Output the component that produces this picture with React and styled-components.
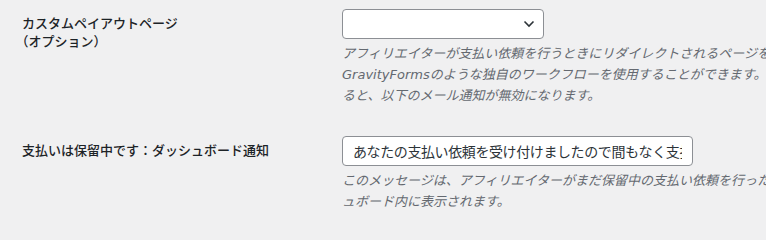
import React from 'react';
import styled, { createGlobalStyle } from 'styled-components';

const GlobalStyle = createGlobalStyle`
  html, body { margin: 0; padding: 0; background: #f0f0f1; overflow: hidden; }
  body {
    font-family: "DejaVu Sans", "Noto Sans CJK JP", sans-serif;
    color: #1d2327;
  }
`;

const Page = styled.div`
  width: 1100px;
  padding: 9px 0 0 22px;
  display: flex;
  flex-direction: column;
  gap: 30px;
`;

const Row = styled.div`
  display: grid;
  grid-template-columns: 320px 1fr;
  align-items: start;
`;

const Label = styled.div`
  padding-top: 5px;
  font-size: 13px;
  font-weight: 500;
  line-height: 18px;
  font-family: "Noto Sans CJK JP", sans-serif;
`;

const Tight = styled.span`
  font-feature-settings: "halt";
`;

const Field = styled.div`
  display: flex;
  flex-direction: column;
  align-items: flex-start;
`;

const SelectBox = styled.div`
  box-sizing: border-box;
  width: 202px;
  height: 30px;
  background: #fff;
  border: 1px solid #8c8f94;
  border-radius: 4px;
  display: flex;
  align-items: center;
  justify-content: flex-end;
  padding-right: 8px;
  color: #2c3338;
`;

const TextInput = styled.input`
  box-sizing: border-box;
  width: 351px;
  height: 30px;
  margin: 0;
  padding: 0 10px;
  background: #fff;
  border: 1px solid #8c8f94;
  border-radius: 4px;
  font-size: 14px;
  letter-spacing: -0.4px;
  font-family: "Noto Sans CJK JP", sans-serif;
  color: #2c3338;
  outline: none;
`;

const Description = styled.p`
  margin: 4px 0 0;
  font-size: 13px;
  line-height: 21px;
  font-style: italic;
  color: #646970;
  white-space: nowrap;
`;

const Chevron = () => (
  <svg width="12" height="8" viewBox="0 0 12 8" fill="none">
    <path d="M1.5 1.5 L6 6 L10.5 1.5" stroke="currentColor" strokeWidth="1.6" />
  </svg>
);

const App = () => (
  <>
    <GlobalStyle />
    <Page>
      <Row>
        <Label>
          カスタムペイアウトページ
          <br />
          <Tight>（</Tight>オプション<Tight>）</Tight>
        </Label>
        <Field>
          <SelectBox>
            <Chevron />
          </SelectBox>
          <Description>
            アフィリエイターが支払い依頼を行うときにリダイレクトされるページを選択します。これにより、
            <br />
            GravityFormsのような独自のワークフローを使用することができます。このページを設定す
            <br />
            ると、以下のメール通知が無効になります。
          </Description>
        </Field>
      </Row>
      <Row>
        <Label>支払いは保留中です：ダッシュボード通知</Label>
        <Field>
          <TextInput
            type="text"
            readOnly
            value="あなたの支払い依頼を受け付けましたので間もなく支払いが行われます。"
          />
          <Description>
            このメッセージは、アフィリエイターがまだ保留中の支払い依頼を行った場合に、アフィリエイターのダッシ
            <br />
            ュボード内に表示されます。
          </Description>
        </Field>
      </Row>
    </Page>
  </>
);

export default App;
